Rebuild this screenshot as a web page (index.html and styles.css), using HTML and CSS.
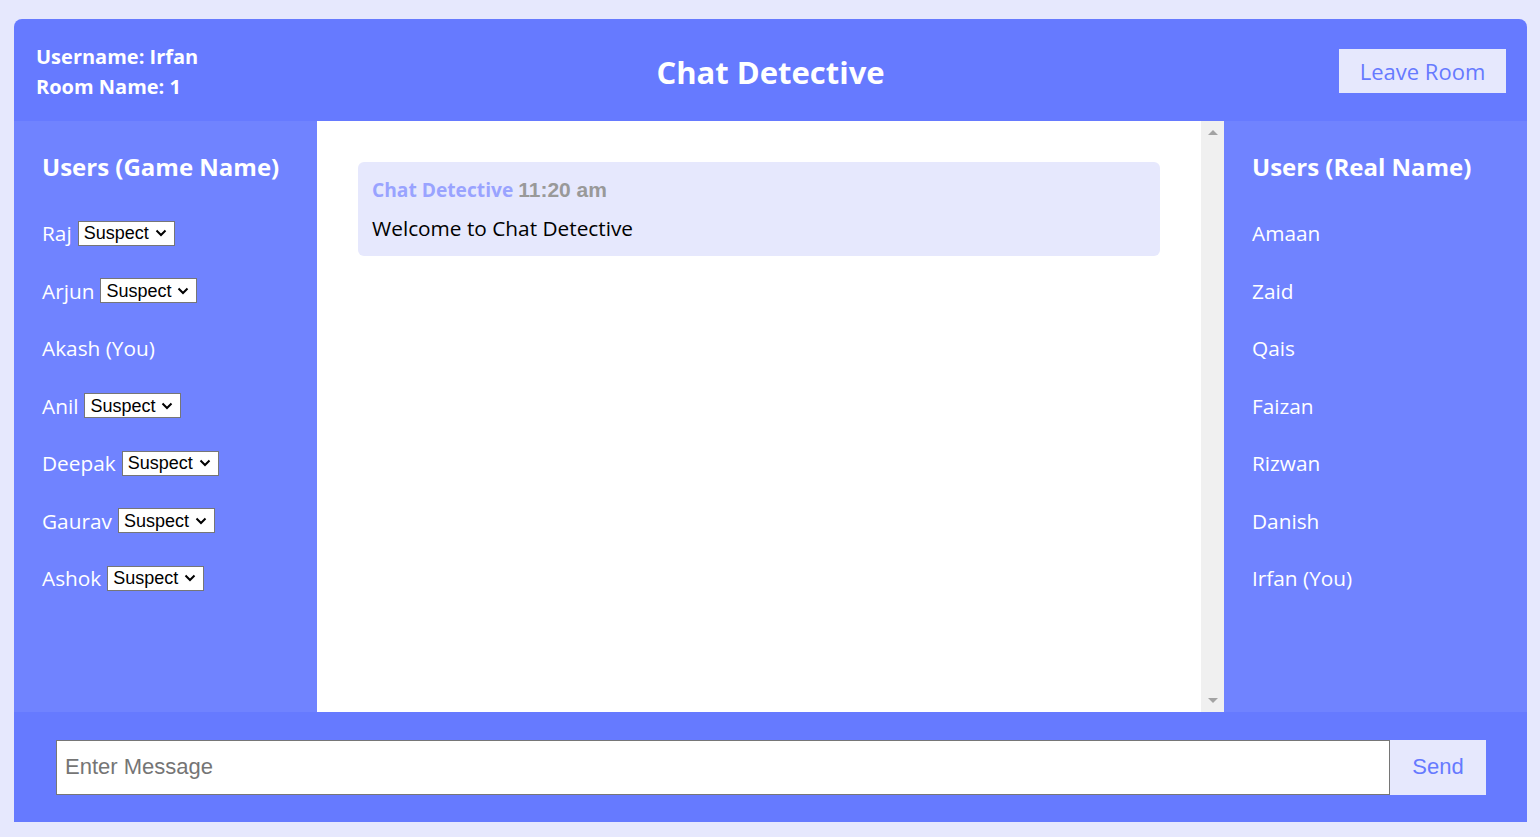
FILE: index.html
```html
<!DOCTYPE html>
<html lang="en">
<head>
<meta charset="utf-8">
<title>Chat Detective</title>
<link rel="stylesheet" href="styles.css">
</head>
<body>
<div class="app">
  <header class="topbar">
    <div class="info">
      <div>Username: Irfan</div>
      <div>Room Name: 1</div>
    </div>
    <h1 class="title">Chat Detective</h1>
    <button class="leave">Leave Room</button>
  </header>
  <main class="middle">
    <aside class="side">
      <h2>Users (Game Name)</h2>
      <ul class="users">
        <li>Raj <select><option>Suspect</option></select></li>
        <li>Arjun <select><option>Suspect</option></select></li>
        <li>Akash (You)</li>
        <li>Anil <select><option>Suspect</option></select></li>
        <li>Deepak <select><option>Suspect</option></select></li>
        <li>Gaurav <select><option>Suspect</option></select></li>
        <li>Ashok <select><option>Suspect</option></select></li>
      </ul>
    </aside>
    <section class="chat">
      <div class="messages">
        <div class="msg">
          <p class="meta">Chat Detective <span class="time">11:20 am</span></p>
          <p class="text">Welcome to Chat Detective</p>
        </div>
      </div>
      <div class="scrollbar">
        <span class="arrow up"></span>
        <span class="arrow down"></span>
      </div>
    </section>
    <aside class="side">
      <h2>Users (Real Name)</h2>
      <ul class="users">
        <li>Amaan</li>
        <li>Zaid</li>
        <li>Qais</li>
        <li>Faizan</li>
        <li>Rizwan</li>
        <li>Danish</li>
        <li>Irfan (You)</li>
      </ul>
    </aside>
  </main>
  <footer class="composer">
    <input class="entry" type="text" placeholder="Enter Message">
    <button class="send">Send</button>
  </footer>
</div>
</body>
</html>
```

FILE: styles.css
```css
* { box-sizing: border-box; }
html, body { height: 100%; }
body {
  margin: 0;
  padding: 19px 13px 15px 14px;
  background: #e6e8fd;
  font-family: "Open Sans", "Lato", sans-serif;
}
.app {
  height: 100%;
  display: flex;
  flex-direction: column;
  border-radius: 8px 8px 0 0;
  overflow: hidden;
}
.topbar {
  height: 102px;
  background: #667aff;
  color: #fff;
  display: flex;
  align-items: center;
  justify-content: space-between;
  padding: 0 21px 0 22px;
  position: relative;
}
.info {
  font-weight: 700;
  font-size: 20px;
  line-height: 30px;
  margin-top: 4px;
}
.title {
  margin: 0;
  font-size: 31px;
  font-weight: 700;
  position: absolute;
  left: 50%;
  top: 50%;
  transform: translate(-50%, -46%);
}
.leave {
  width: 167px;
  height: 44px;
  border: none;
  background: #e6e8fd;
  color: #667aff;
  font-family: inherit;
  font-size: 22px;
  margin-top: 1px;
}
.middle {
  flex: 1;
  display: flex;
  min-height: 0;
}
.side {
  width: 303px;
  background: #7083ff;
  color: #fff;
  padding: 28px 28px;
}
.side h2 {
  margin: 0 0 33px;
  font-size: 24px;
  line-height: 36px;
  font-weight: 700;
}
.users {
  list-style: none;
  margin: 0;
  padding: 0;
  display: flex;
  flex-direction: column;
  gap: 27.5px;
}
.users li {
  height: 30px;
  display: flex;
  align-items: center;
  gap: 6px;
  font-size: 20.8px;
}
.users select {
  -webkit-appearance: none;
  appearance: none;
  font-family: "Liberation Sans", Arial, sans-serif;
  font-size: 18px;
  width: 97px;
  height: 25px;
  border: 1px solid #767676;
  border-radius: 0;
  background: #fff url("data:image/svg+xml,%3Csvg xmlns='http://www.w3.org/2000/svg' width='12' height='8' viewBox='0 0 12 8'%3E%3Cpath d='M1.5 1.5 6 6 10.5 1.5' fill='none' stroke='%23000' stroke-width='2'/%3E%3C/svg%3E") no-repeat right 7px center;
  color: #000;
  padding: 0 0 0 5px;
}
.chat {
  flex: 1;
  display: flex;
  background: #fff;
}
.messages {
  flex: 1;
  padding: 41px;
}
.msg {
  background: #e6e8fd;
  border-radius: 6px;
  padding: 14px 14px;
}
.msg p {
  margin: 0;
  line-height: 28px;
  font-size: 20.8px;
}
.meta {
  color: #99a3ff;
  font-weight: 700;
  font-size: 19.2px !important;
  margin-bottom: 10px !important;
}
.time {
  color: #999;
  font-family: "Liberation Sans", Arial, sans-serif;
  font-size: 21px;
}
.text { color: #000; }
.scrollbar {
  width: 23px;
  background: #f0f0f0;
  display: flex;
  flex-direction: column;
  justify-content: space-between;
  align-items: center;
  padding: 9px 0 9px;
}
.arrow {
  width: 0;
  height: 0;
  border-left: 5px solid transparent;
  border-right: 5px solid transparent;
}
.arrow.up { border-bottom: 5px solid #a3a3a3; }
.arrow.down { border-top: 5px solid #a3a3a3; }
.composer {
  height: 110px;
  background: #667aff;
  display: flex;
  align-items: center;
  padding: 0 41px 0 42px;
}
.entry {
  flex: 1;
  height: 55px;
  border: 1px solid #767676;
  border-radius: 0;
  padding: 0 8px;
  font-family: "Liberation Sans", Arial, sans-serif;
  font-size: 22px;
  background: #fff;
  outline: none;
}
.entry::placeholder { color: #757575; }
.send {
  width: 96px;
  height: 55px;
  border: none;
  background: #e6e8fd;
  color: #667aff;
  font-family: "Liberation Sans", Arial, sans-serif;
  font-size: 22px;
}
```
